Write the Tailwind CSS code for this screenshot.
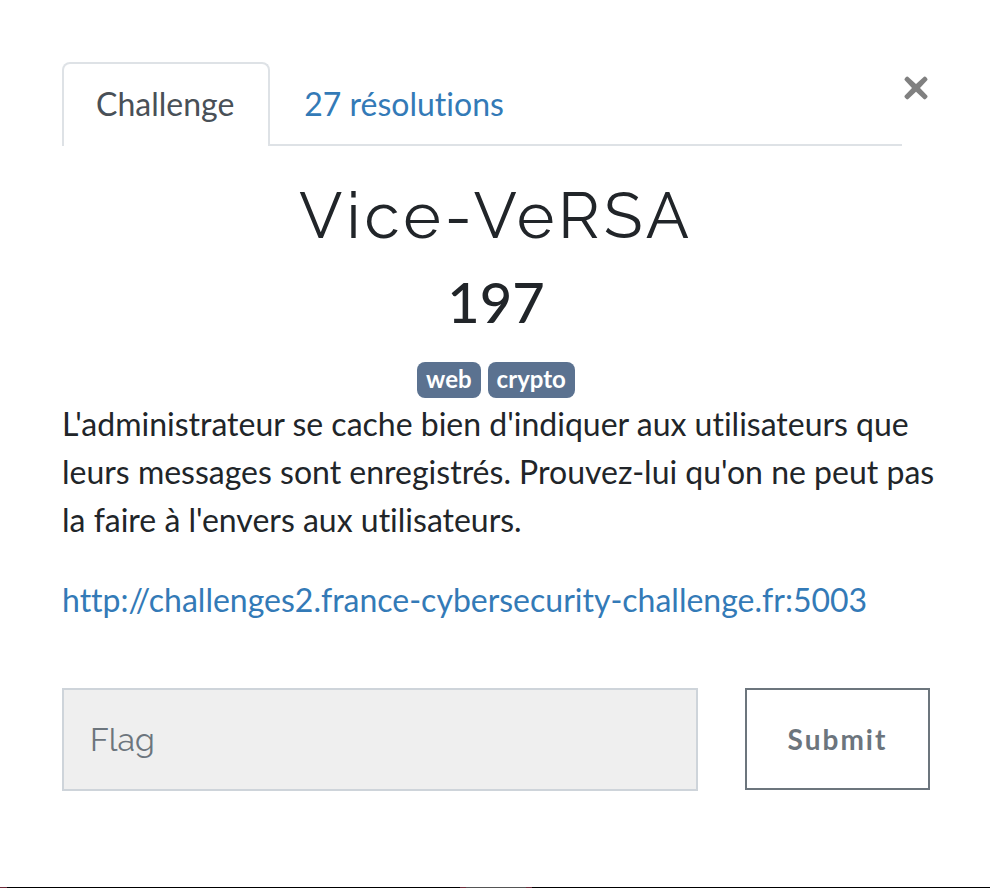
<!DOCTYPE html>
<html lang="fr">
<head>
<meta charset="utf-8">
<meta name="viewport" content="width=device-width, initial-scale=1">
<title>Vice-VeRSA</title>
<script src="https://cdn.jsdelivr.net/npm/@tailwindcss/browser@4"></script>
</head>
<body class="bg-white font-[Lato,sans-serif] text-[32px] leading-[48px] text-[#212529] [font-variant-ligatures:none]">
<div class="relative flex min-h-screen flex-col">
<main class="flex-1 pr-[60px] pl-[62px] pt-[62px] pb-24">
  <button type="button" aria-label="Fermer" class="absolute top-[76px] right-[62px] text-[#808080]">
    <svg class="h-6 w-6" viewBox="0 0 24 24" fill="currentColor"><path d="M4 .8 12 8 20 .8Q21 0 22 1L23.2 2.4Q24 3.3 23.2 4.2L16 12 23.2 19.4Q24 20.4 23.2 21.4L21.7 23Q20.7 23.8 19.7 23L12 15.8 4.3 23Q3.3 23.8 2.3 23L.8 21.4Q0 20.4 .8 19.4L8 12 .8 4.2Q0 3.3 .8 2.4L2 1Q3 0 4 .8Z"/></svg>
  </button>
  <nav class="mr-7 flex border-b-2 border-[#dee2e6]">
    <a href="#challenge" class="-mb-[2px] rounded-t-lg border-2 border-b-0 border-[#dee2e6] bg-white pt-4 pr-[34px] pb-[18px] pl-8 text-[#495057]">Challenge</a>
    <a href="#solves" class="px-[34px] pt-[18px] pb-4 text-[#337ab7]">27 résolutions</a>
  </nav>
  <section id="challenge" class="pt-8">
    <h1 class="text-center font-[Raleway,sans-serif] text-[64px] leading-[76px] font-normal tracking-[4px]">Vice-VeRSA</h1>
    <h2 class="pt-[14px] text-center text-[56px] leading-[68px] font-medium">197</h2>
    <div class="mt-[26px] mb-[2px] flex justify-center gap-[7px] text-2xl leading-6 font-bold text-white">
      <span class="rounded-lg bg-[#5b7290] px-[9px] pt-[5px] pb-[7px]">web</span>
      <span class="rounded-lg bg-[#5b7290] px-[9px] pt-[5px] pb-[7px]">crypto</span>
    </div>
    <p class="-mr-2">L'administrateur se cache bien d'indiquer aux utilisateurs que leurs messages sont enregistrés. Prouvez-lui qu'on ne peut pas la faire à l'envers aux utilisateurs.</p>
    <p class="mt-8"><a href="#" class="text-[#337ab7]">http://challenges2.france-cybersecurity-challenge.fr:5003</a></p>
  </section>
  <form class="mt-16 flex items-start gap-[47px]">
    <input type="text" aria-label="Flag" placeholder="Flag" class="h-[103px] min-w-0 flex-1 border-2 border-[#ced4da] bg-[#efefef] px-[26px] font-[Raleway,sans-serif] placeholder:text-[#6c757d]">
    <button type="submit" class="h-[102px] w-[185px] border-2 border-[#6c757d] text-[28px] font-bold tracking-[2px] text-[#6c757d]">Submit</button>
  </form>
</main>
<footer class="flex h-px bg-black">
  <div class="w-[7px] bg-[#6b2b3a]"></div>
  <div class="ml-[453px] w-[72px] border-x-6 border-[#6b2b3a] bg-[#555]"></div>
</footer>
</div>
</body>
</html>
